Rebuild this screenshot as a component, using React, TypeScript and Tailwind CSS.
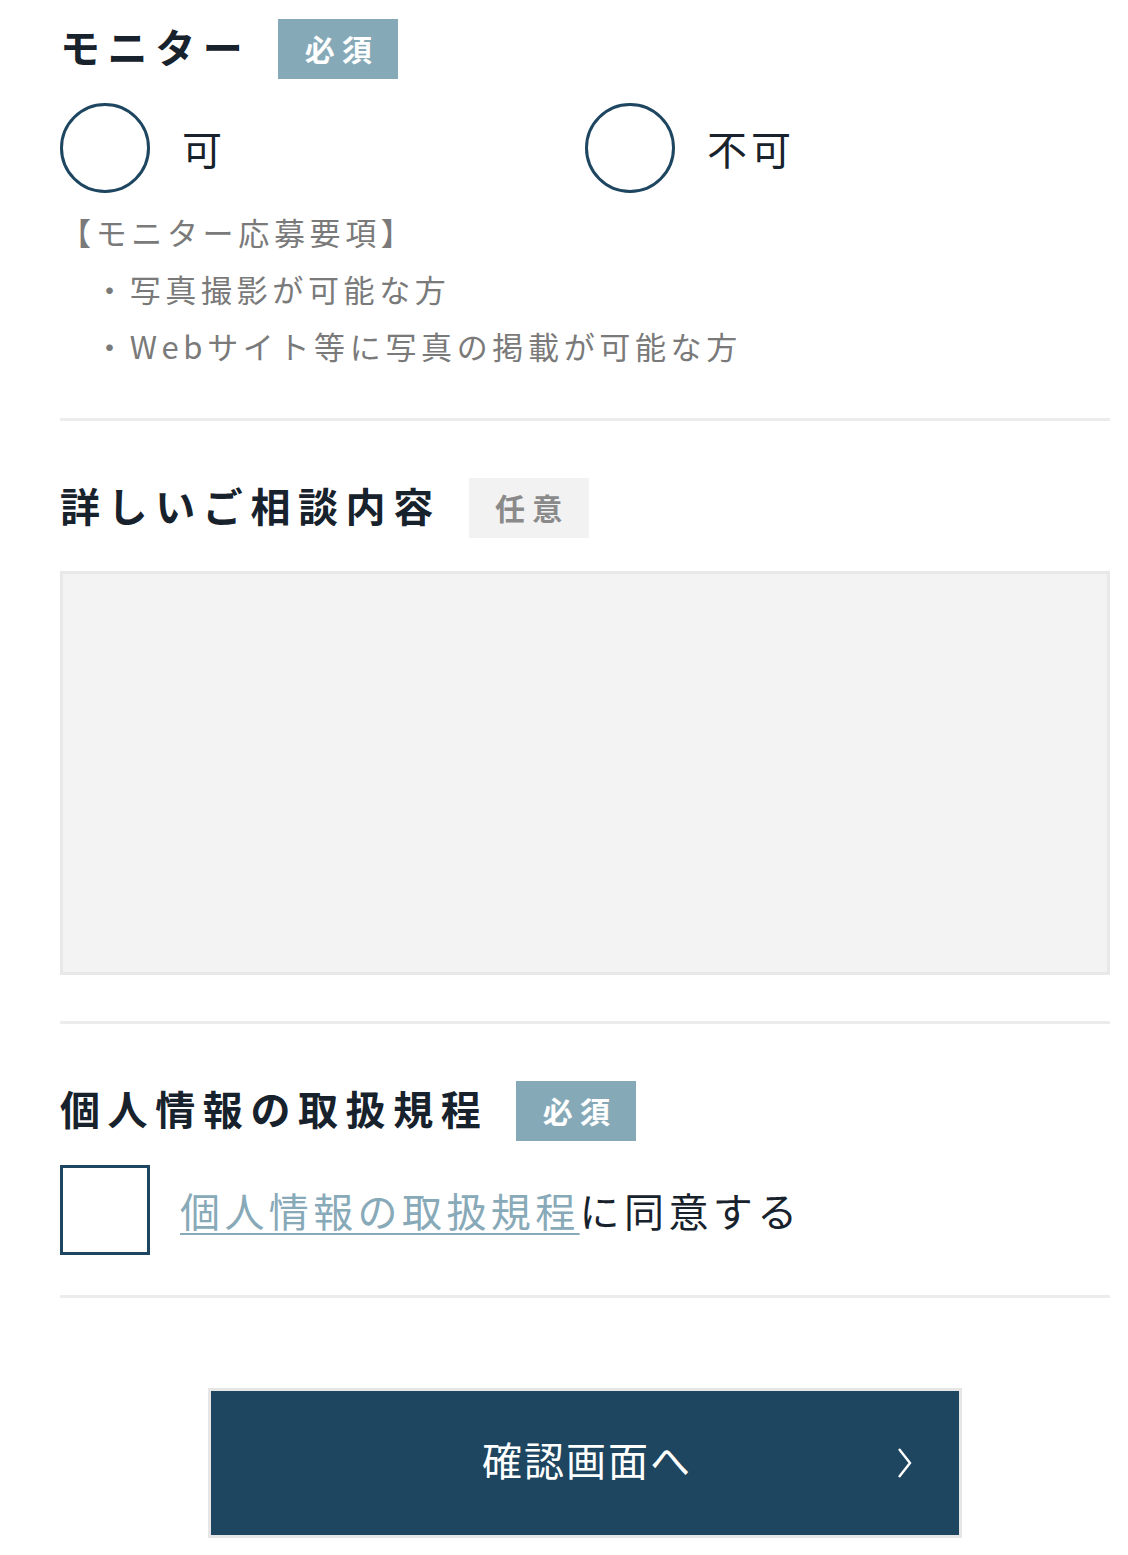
import { useState } from 'react';

const font = { fontFamily: '"Noto Sans CJK JP", "Noto Sans", sans-serif' };

function Badge({ required }: { required: boolean }) {
  return required ? (
    <span className="flex h-[60px] w-[120px] items-center justify-center bg-[#86a9b8] pl-[7px] pb-[2px] text-[30px] font-bold tracking-[0.24em] text-white">
      必須
    </span>
  ) : (
    <span className="flex h-[60px] w-[120px] items-center justify-center bg-[#f2f2f2] pl-[7px] pb-[2px] text-[30px] font-bold tracking-[0.24em] text-[#8a8a8a]">
      任意
    </span>
  );
}

function FieldTitle({ label, required }: { label: string; required: boolean }) {
  return (
    <div className="flex items-center gap-[28px]">
      <h2 className="pb-[7px] text-[40px] font-bold leading-none tracking-[0.19em] text-[#17222c]">{label}</h2>
      <Badge required={required} />
    </div>
  );
}

function Divider() {
  return <div className="h-[3px] w-full bg-[#ececec]" />;
}

export default function App() {
  const [monitor, setMonitor] = useState<string | null>(null);
  const [agree, setAgree] = useState(false);

  return (
    <div className="min-h-[1555px] bg-white pl-[60px] pr-[18px] pt-[19px] pb-[18px]" style={font}>
      {/* モニター */}
      <section>
        <FieldTitle label="モニター" required />
        <div className="mt-[24px] grid grid-cols-2">
          {['可', '不可'].map((opt) => (
            <label key={opt} className="flex cursor-pointer items-center gap-[32px]" onClick={() => setMonitor(opt)}>
              <span className="flex h-[90px] w-[90px] items-center justify-center rounded-full border-[3px] border-[#1e4660]">
                {monitor === opt && <span className="h-[44px] w-[44px] rounded-full bg-[#1e4660]" />}
              </span>
              <span className="text-[40px] tracking-[0.1em] text-[#17222c]">{opt}</span>
            </label>
          ))}
        </div>
        <div className="mt-[10px] text-[31px] leading-[57px] tracking-[0.15em] text-[#7a7a7a]">
          <p>【モニター応募要項】</p>
          <p className="pl-[34px]">・写真撮影が可能な方</p>
          <p className="pl-[34px]">・Webサイト等に写真の掲載が可能な方</p>
        </div>
      </section>

      <div className="mt-[44px]">
        <Divider />
      </div>

      {/* 詳しいご相談内容 */}
      <section className="mt-[57px]">
        <FieldTitle label="詳しいご相談内容" required={false} />
        <textarea className="mt-[33px] block h-[404px] w-full resize-none border-[3px] border-[#e8e8e8] bg-[#f3f3f3] p-4 text-[30px] outline-none" />
      </section>

      <div className="mt-[46px]">
        <Divider />
      </div>

      {/* 個人情報の取扱規程 */}
      <section className="mt-[57px]">
        <FieldTitle label="個人情報の取扱規程" required />
        <label className="mt-[24px] flex items-center gap-[30px]">
          <span
            className="flex h-[90px] w-[90px] cursor-pointer items-center justify-center border-[3px] border-[#1e4660]"
            onClick={() => setAgree(!agree)}
          >
            {agree && <span className="h-[40px] w-[40px] bg-[#1e4660]" />}
          </span>
          <span className="text-[40px] tracking-[0.11em] text-[#17222c]">
            <a href="#" className="text-[#87a9b8] underline decoration-[2px] underline-offset-[6px]">
              個人情報の取扱規程
            </a>
            に同意する
          </span>
        </label>
      </section>

      <div className="mt-[40px]">
        <Divider />
      </div>

      {/* 送信ボタン */}
      <div className="mt-[90px] flex justify-center">
        <button
          type="button"
          className="relative flex h-[150px] w-[754px] items-center justify-center border-[3px] border-[#e6e6e6] bg-[#1e4660] text-white"
        >
          <span
            className="pl-[4px] text-[40px] tracking-[0.05em]"
            style={{ fontFamily: '"Liberation Serif", "Noto Sans CJK JP", serif' }}
          >
            確認画面へ
          </span>
          <svg className="absolute right-[46px] top-1/2 -translate-y-1/2" width="16" height="32" viewBox="0 0 16 32" fill="none">
            <path d="M2 2 L13 16 L2 30" stroke="white" strokeWidth="2.4" strokeLinejoin="miter" />
          </svg>
        </button>
      </div>
    </div>
  );
}
